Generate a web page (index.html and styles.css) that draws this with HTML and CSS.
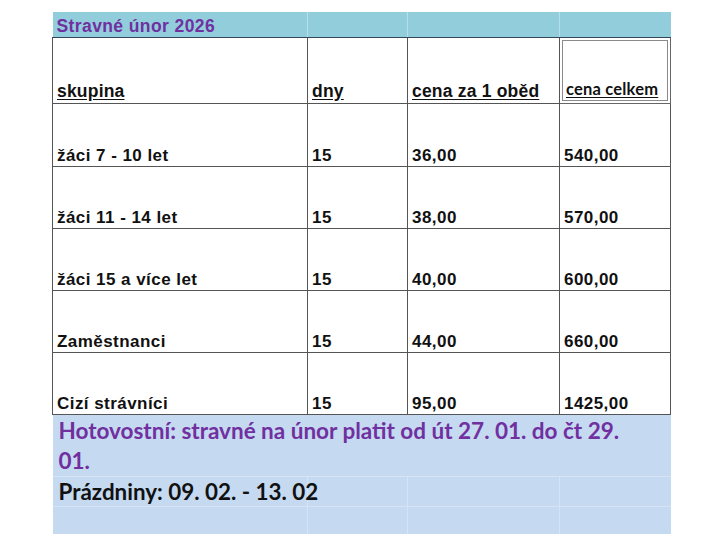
FILE: index.html
```html
<!DOCTYPE html>
<html lang="cs">
<head>
<meta charset="utf-8">
<title>Stravné únor 2026</title>
<link rel="stylesheet" href="styles.css">
</head>
<body>
<div class="page">
<table class="sheet">
  <colgroup>
    <col class="c1"><col class="c2"><col class="c3"><col class="c4">
  </colgroup>
  <tr class="title-row">
    <td class="title">Stravné únor 2026</td><td></td><td></td><td></td>
  </tr>
  <tr class="head-row">
    <td class="head">skupina</td>
    <td class="head">dny</td>
    <td class="head">cena za 1 oběd</td>
    <td class="head total"><span class="total-label">cena celkem</span></td>
  </tr>
  <tr class="data-row r1"><td>žáci 7 - 10 let</td><td>15</td><td>36,00</td><td>540,00</td></tr>
  <tr class="data-row"><td>žáci 11 - 14 let</td><td>15</td><td>38,00</td><td>570,00</td></tr>
  <tr class="data-row"><td>žáci 15 a více let</td><td>15</td><td>40,00</td><td>600,00</td></tr>
  <tr class="data-row"><td>Zaměstnanci</td><td>15</td><td>44,00</td><td>660,00</td></tr>
  <tr class="data-row last"><td>Cizí strávníci</td><td>15</td><td>95,00</td><td>1425,00</td></tr>
  <tr class="note-row">
    <td colspan="4" class="note">Hotovostní: stravné na únor platit od út 27. 01. do čt 29. 01.</td>
  </tr>
  <tr class="holiday-row">
    <td class="holiday">Prázdniny: 09. 02. - 13. 02</td><td></td><td></td><td></td>
  </tr>
  <tr class="empty-row"><td></td><td></td><td></td><td></td></tr>
</table>
</div>
</body>
</html>
```
FILE: styles.css
```css
html, body {
  margin: 0;
  padding: 0;
  background: #ffffff;
}
.page {
  padding: 12px 0 0 52px;
}
.sheet {
  border-collapse: collapse;
  table-layout: fixed;
  width: 618px;
  font-family: "Liberation Sans", Arial, sans-serif;
  font-weight: bold;
  color: #111;
}
.c1 { width: 255px; }
.c2 { width: 100px; }
.c3 { width: 152px; }
.c4 { width: 111px; }

.sheet td {
  padding: 0 0 0 4px;
  vertical-align: bottom;
  white-space: nowrap;
  overflow: visible;
}

.title-row { height: 25px; }
.title-row td {
  background: #92cddc;
  border-left: 1px solid #b6dfe9;
  border-bottom: 1px solid #33475a;
  padding-bottom: 0;
}
.title-row td:first-child { border-left: none; }
.title {
  color: #7030a0;
  font-size: 17.5px;
  letter-spacing: 0.4px;
}

.head-row { height: 66px; }
.head-row td {
  border: 1px solid #555;
  padding-bottom: 1px;
}
.head {
  font-size: 17.5px;
  letter-spacing: 0.2px;
  text-decoration: underline;
  text-underline-offset: 2px;
}
.head.total {
  border: 1px solid #666;
  box-shadow: inset 0 0 0 2px #fff, inset 0 0 0 3px #8a8a8a;
  padding-left: 6px;
  padding-bottom: 3px;
}
.total-label {
  font-family: "Lato", "Open Sans", sans-serif;
  font-size: 16.5px;
}

.data-row { height: 62px; }
.data-row.r1 { height: 63px; }
.data-row td {
  border: 1px solid #555;
  font-size: 17px;
  letter-spacing: 0.45px;
  padding-bottom: 0;
}

.note-row { height: 62px; }
.note-row td, .holiday-row td, .empty-row td {
  background: #c5d9f1;
  border-left: 1px solid #d5e3f5;
  border-top: 1px solid #d5e3f5;
}
.note-row td:first-child, .holiday-row td:first-child, .empty-row td:first-child {
  border-left: none;
}
.note {
  white-space: normal !important;
  vertical-align: top !important;
  font-family: "Lato", "Open Sans", sans-serif;
  color: #7030a0;
  font-size: 22.5px;
  line-height: 30px;
  padding: 1px 30px 0 6px !important;
}

.holiday-row { height: 30px; }
.holiday {
  font-family: "Lato", "Open Sans", sans-serif;
  color: #111;
  font-size: 22.4px;
  vertical-align: middle !important;
  padding-left: 6px !important;
}
.empty-row { height: 28px; }
```
